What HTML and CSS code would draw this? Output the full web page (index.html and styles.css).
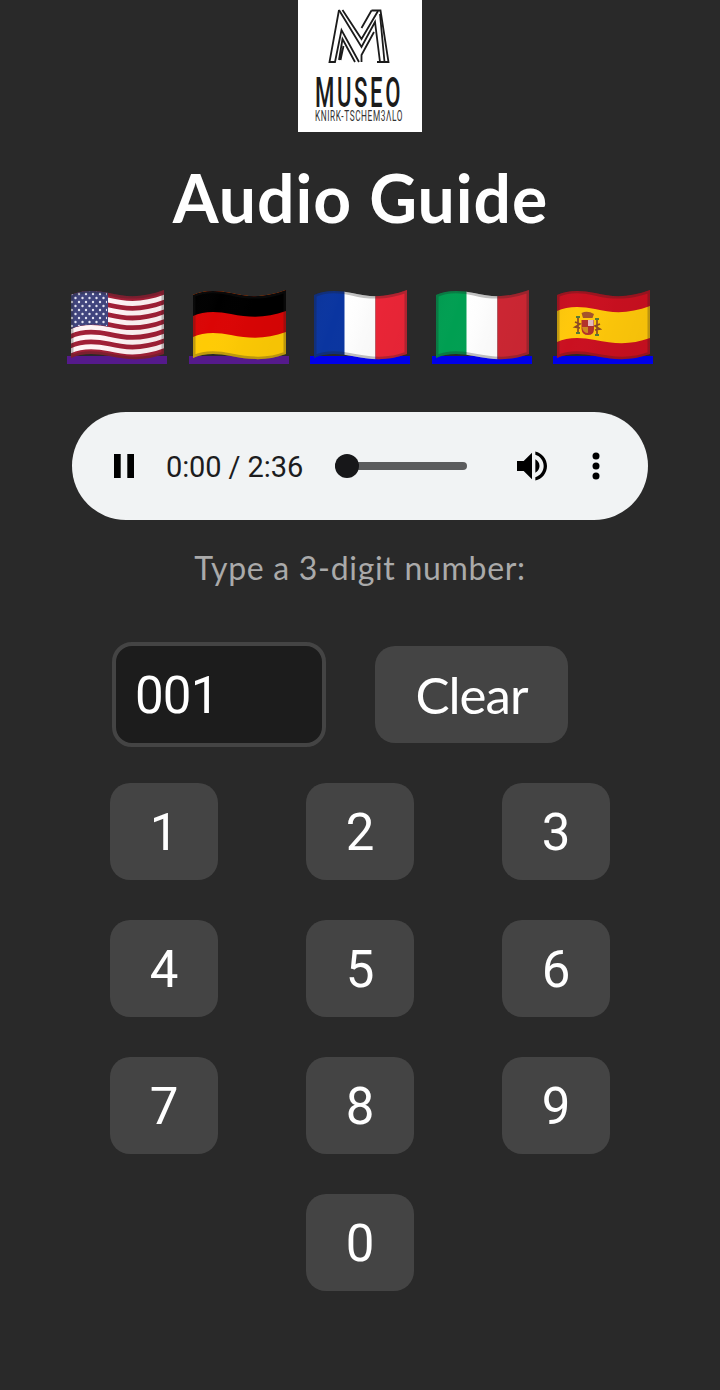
FILE: index.html
```html
<!DOCTYPE html>
<html lang="en">
<head>
<meta charset="utf-8">
<title>Audio Guide</title>
<link rel="stylesheet" href="styles.css">
</head>
<body>
<svg class="defs" width="0" height="0" aria-hidden="true">
  <defs>
    <clipPath id="wave"><path d="M4 5C14 0 28 0 42 3C62 8 78 7 97 0V64C78 71 62 70 42 66C28 63 14 63 4 68Z"/></clipPath>
    <linearGradient id="shade" x1="0" x2="1" y1="0" y2="0.25">
      <stop offset="0" stop-color="#000" stop-opacity=".04"/>
      <stop offset=".3" stop-color="#fff" stop-opacity="0"/>
      <stop offset=".65" stop-color="#000" stop-opacity=".02"/>
      <stop offset="1" stop-color="#000" stop-opacity=".04"/>
    </linearGradient>
    <g id="finish">
      <path d="M4 5C14 0 28 0 42 3C62 8 78 7 97 0V64C78 71 62 70 42 66C28 63 14 63 4 68Z" fill="url(#shade)"/>
      <path d="M4 5C14 0 28 0 42 3C62 8 78 7 97 0V64C78 71 62 70 42 66C28 63 14 63 4 68Z" clip-path="url(#wave)" fill="none" stroke="#222" stroke-opacity=".28" stroke-width="5"/>
    </g>
    <path id="stripe" d="M4 5C14 0 28 0 42 3C62 8 78 7 97 0V4.9C78 11.9 62 12.9 42 7.9C28 4.9 14 4.9 4 9.9Z"/>
    <pattern id="stars" width="7" height="8" patternUnits="userSpaceOnUse" patternTransform="translate(3 2)">
      <circle cx="2" cy="2" r="1.2" fill="#e4e4f2"/><circle cx="5.5" cy="6" r="1.2" fill="#e4e4f2"/>
    </pattern>
  </defs>
</svg>
<main class="guide">
  <svg class="logo" viewBox="0 0 124 132" role="img" aria-label="Museo">
    <g class="logo-mark">
      <path d="M41 10L31.500 62H37L43.500 30L61 62"/>
      <path d="M45.500 46L42.500 60M41 60L44.500 39L57 62"/>
      <path d="M41 10L63.500 47L77 22L82 62"/>
      <path d="M44.500 10L63.500 39L80 11"/>
      <path d="M73.500 10.500H82.500L90.500 62H79M73.500 10.500L63.500 28"/>
      <path d="M82 14L86.500 62M63.500 62V55L76 32"/>
    </g>
    <text class="logo-name" x="17" y="107" textLength="88" lengthAdjust="spacingAndGlyphs">MUSEO</text>
    <text class="logo-sub" x="17" y="120.500" textLength="88" lengthAdjust="spacingAndGlyphs">KNIRK-TSCHEM3ΛLO</text>
  </svg>
  <h1 class="title">Audio Guide</h1>
  <nav class="flags">
    <a class="flag visited"><svg viewBox="0 0 100 72"><g clip-path="url(#wave)">
      <rect width="100" height="72" fill="#a01f36"/>
      <g fill="#fff4f5"><use href="#stripe" y="4.85"/><use href="#stripe" y="14.55"/><use href="#stripe" y="24.25"/><use href="#stripe" y="33.95"/><use href="#stripe" y="43.65"/><use href="#stripe" y="53.35"/></g>
      <path d="M4 3V39C14 34 28 34 41 36.500V0H4Z" fill="#40447d"/>
      <path d="M4 3V38C14 34 28 34 40 36V0H4Z" fill="url(#stars)"/></g><use href="#finish"/></svg></a>
    <a class="flag visited"><svg viewBox="0 0 100 72"><g clip-path="url(#wave)">
      <rect width="100" height="72" fill="#ffcb05"/>
      <path d="M4 0H97V42C78 49 62 49 42 45C28 42 14 42 4 47Z" fill="#db0505"/>
      <path d="M4 0H97V21C78 28 62 28 42 24C28 21 14 21 4 26Z" fill="#000"/></g><use href="#finish"/></svg></a>
    <a class="flag"><svg viewBox="0 0 100 72"><g clip-path="url(#wave)">
      <rect width="35" height="72" fill="#0a35a0"/><rect x="34.500" width="31" height="72" fill="#fff"/><rect x="65.500" width="35" height="72" fill="#ef2638"/></g><use href="#finish"/></svg></a>
    <a class="flag"><svg viewBox="0 0 100 72"><g clip-path="url(#wave)">
      <rect width="35" height="72" fill="#009f52"/><rect x="34.500" width="31" height="72" fill="#fff"/><rect x="65.500" width="35" height="72" fill="#d02734"/></g><use href="#finish"/></svg></a>
    <a class="flag"><svg viewBox="0 0 100 72"><g clip-path="url(#wave)">
      <rect width="100" height="72" fill="#ca1020"/>
      <path d="M4 21C14 16 28 16 42 19C62 24 78 23 97 16V48C78 55 62 54 42 50C28 47 14 47 4 52Z" fill="#ffc80a"/>
      <g fill="none" stroke="#8c4a24" stroke-width="1.700">
        <path d="M25 27V44M44 29V46M22 32L27 34L22 37L27 38M47 34L42 36L47 39L42 40"/></g>
      <path d="M28.500 23Q34.500 20 41 24L39.500 28H30Z" fill="#a5542a"/>
      <path d="M28.500 30H41V39Q41 45 35 45T28.500 39Z" fill="#b3322b"/>
      <path d="M35 30H40.500V36H35Z" fill="#e3b9bd"/><path d="M29 37H35V43Q30 43 29 37Z" fill="#d08b1e"/>
      <path d="M23 43H27M42 45H46M23 27H27M42 29H46" stroke="#557a38" stroke-width="2"/></g><use href="#finish"/></svg></a>
  </nav>
  <section class="player">
    <svg class="pause" viewBox="0 0 20 24"><path d="M0 0H6.700V24H0ZM13.300 0H20V24H13.300Z"/></svg>
    <span class="time">0:00 / 2:36</span>
    <div class="track"><span class="thumb"></span></div>
    <svg class="volume" viewBox="0 0 24 24"><path d="M3 9v6h4l5 5V4L7 9H3zm13.500 3c0-1.770-1.020-3.290-2.500-4.030v8.050c1.480-.73 2.500-2.250 2.500-4.020zM14 3.230v2.060c2.890.86 5 3.540 5 6.710s-2.110 5.850-5 6.710v2.060c4.010-.91 7-4.490 7-8.770s-2.990-7.860-7-8.770z"/></svg>
    <svg class="more" viewBox="0 0 8 28"><circle cx="4" cy="4" r="3.500"/><circle cx="4" cy="14" r="3.500"/><circle cx="4" cy="24" r="3.500"/></svg>
  </section>
  <p class="prompt">Type a 3-digit number:</p>
  <div class="entry">
    <div class="field"><span>001</span></div>
    <button class="key clear">Clear</button>
  </div>
  <div class="keypad">
    <button class="key">1</button><button class="key">2</button><button class="key">3</button>
    <button class="key">4</button><button class="key">5</button><button class="key">6</button>
    <button class="key">7</button><button class="key">8</button><button class="key">9</button>
    <button class="key zero">0</button>
  </div>
</main>
</body>
</html>
```
FILE: styles.css
```css
* { box-sizing: border-box; }
body {
  margin: 0;
  background: #292929;
  color: #fff;
  font-family: Lato, "Noto Sans", sans-serif;
}
.defs { position: absolute; }
.guide {
  display: flex;
  flex-direction: column;
  align-items: center;
  width: 720px;
  height: 1390px;
  overflow: hidden;
}
.logo { width: 124px; height: 132px; background: #fff; flex: none; }
.logo-mark { fill: none; stroke: #1b1b1b; stroke-width: 1.8; }
.logo-name { font: 500 42px Roboto, sans-serif; letter-spacing: 5px; fill: #1b1b1b; }
.logo-sub { font: 400 14px Roboto, sans-serif; letter-spacing: 1px; fill: #333; }
.title {
  margin: 25px 0 0;
  height: 80px;
  padding-left: 1px;
  line-height: 81px;
  font-size: 66px;
  font-weight: 700;
  letter-spacing: 1px;
  white-space: nowrap;
}
.flags { display: flex; gap: 21.500px; margin-top: 53px; }
.flag {
  width: 100px;
  height: 74px;
  background: linear-gradient(#0000e8, #0000e8) 0 66px / 100% 8px no-repeat;
}
.flag.visited { background-image: linear-gradient(#551a8b, #551a8b); }
.flag svg { display: block; width: 100px; height: 72px; }
.player {
  display: flex;
  align-items: center;
  width: 576px;
  height: 108px;
  margin-top: 48px;
  padding: 0 48px 0 42px;
  border-radius: 54px;
  background: #f1f3f4;
  color: #1c1c1e;
}
.pause { width: 20px; height: 24px; }
.time {
  width: 137px;
  margin-left: 32px;
  padding-top: 1px;
  font-family: Roboto, sans-serif;
  font-size: 29px;
  letter-spacing: -0.1px;
  white-space: nowrap;
}
.track {
  display: flex;
  align-items: center;
  width: 132px;
  height: 8px;
  margin-left: 32px;
  border-radius: 4px;
  background: #5b5c5d;
}
.thumb { width: 24px; height: 24px; border-radius: 50%; background: #171719; flex: none; }
.volume { width: 40px; height: 40px; margin-left: 45px; }
.more { width: 8px; height: 28px; margin-left: 40px; }
.prompt {
  margin: 28px 0 0;
  height: 40px;
  line-height: 40px;
  font-size: 32px;
  letter-spacing: 0.7px;
  color: #aaa;
  white-space: nowrap;
}
.entry { display: flex; align-items: center; gap: 49px; width: 496px; margin: 54px 0 0; }
.field {
  width: 214px;
  height: 105px;
  padding-left: 19px;
  border: 4px solid #444;
  border-radius: 20px;
  background: #1c1c1c;
  font-family: Roboto, sans-serif;
  font-size: 51px;
  line-height: 99px;
  letter-spacing: -0.8px;
}
.key {
  width: 108px;
  height: 97px;
  padding: 3px 0 0;
  border: 0;
  border-radius: 20px;
  background: #444;
  color: #fff;
  font: 400 51px/94px Roboto, sans-serif;
}
.clear {
  width: 193px;
  padding: 0;
  font: 400 51px/95px Lato, "Noto Sans", sans-serif;
  letter-spacing: -1px;
}
.keypad {
  display: grid;
  grid-template-columns: repeat(3, 108px);
  gap: 40px 88px;
  margin-top: 36px;
}
.zero { grid-column: 2; }
```
